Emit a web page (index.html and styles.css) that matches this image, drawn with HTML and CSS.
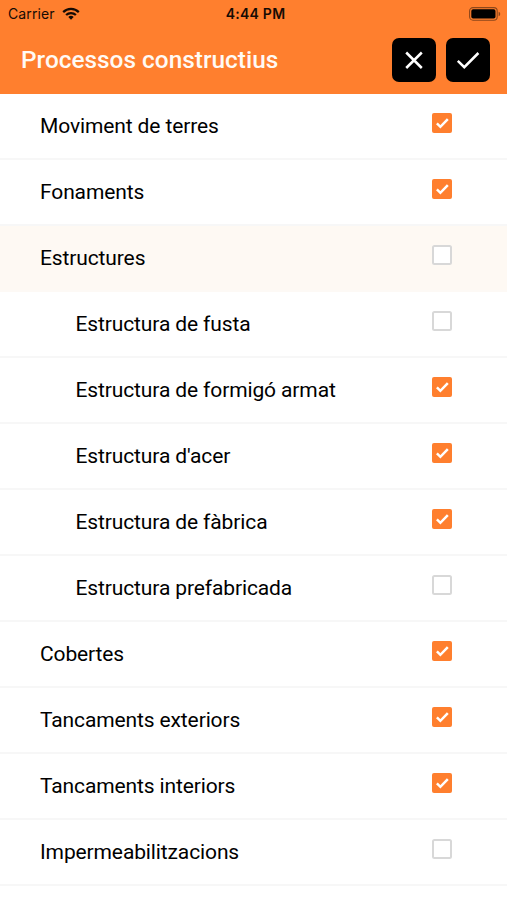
FILE: index.html
```html
<!DOCTYPE html>
<html lang="ca">
<head>
<meta charset="utf-8">
<title>Processos constructius</title>
<link rel="stylesheet" href="styles.css">
</head>
<body>
<svg class="defs" width="0" height="0" aria-hidden="true">
  <symbol id="on" viewBox="0 0 20 20"><rect width="20" height="20" rx="2" fill="#ff7f2e"/><path d="M4.9 10.3 8.4 13.8 15.8 6.1" fill="none" stroke="#fff" stroke-width="2.5"/></symbol>
  <symbol id="off" viewBox="0 0 20 20"><rect x="1" y="1" width="18" height="18" rx="1.5" fill="#fff" stroke="#d8d8d8" stroke-width="2"/></symbol>
</svg>
<header class="header">
  <div class="status">
    <div class="carrier"><span>Carrier</span>
      <svg class="wifi" width="18" height="13" viewBox="0 0 18 13"><g fill="none" stroke="#160b04" stroke-width="2.2"><path d="M1.2 5.1a11 11 0 0 1 15.6 0"/><path d="M4.1 8.1a6.9 6.9 0 0 1 9.8 0"/></g><path d="M9 12.7 6.3 10a3.8 3.8 0 0 1 5.4 0z" fill="#160b04"/></svg>
    </div>
    <div class="time">4:44 PM</div>
    <svg class="battery" width="32" height="14" viewBox="0 0 32 14"><rect x=".6" y=".6" width="27.6" height="12.6" rx="3.4" fill="none" stroke="#8d471b" stroke-width="1.1"/><rect x="2.3" y="2.3" width="24.2" height="9.2" rx="1.8" fill="#000"/><path d="M29.6 4.8a2.3 2.3 0 0 1 0 4.4z" fill="#8d471b"/></svg>
  </div>
  <div class="bar">
    <h1 class="title">Processos constructius</h1>
    <button class="action" aria-label="Cancel·la"><svg width="44" height="44" viewBox="0 0 44 44"><path d="M14.2 14.5 29.8 30M29.8 14.5 14.2 30"/></svg></button>
    <button class="action" aria-label="Accepta"><svg width="44" height="44" viewBox="0 0 44 44"><path d="M11.8 22.8 18.3 29.2 32.4 15"/></svg></button>
  </div>
</header>
<ul class="list">
  <li class="row"><span>Moviment de terres</span><svg class="check"><use href="#on"/></svg></li>
  <li class="row"><span>Fonaments</span><svg class="check"><use href="#on"/></svg></li>
  <li class="row active"><span>Estructures</span><svg class="check"><use href="#off"/></svg></li>
  <li class="row child"><span>Estructura de fusta</span><svg class="check"><use href="#off"/></svg></li>
  <li class="row child"><span>Estructura de formigó armat</span><svg class="check"><use href="#on"/></svg></li>
  <li class="row child"><span>Estructura d'acer</span><svg class="check"><use href="#on"/></svg></li>
  <li class="row child"><span>Estructura de fàbrica</span><svg class="check"><use href="#on"/></svg></li>
  <li class="row child"><span>Estructura prefabricada</span><svg class="check"><use href="#off"/></svg></li>
  <li class="row"><span>Cobertes</span><svg class="check"><use href="#on"/></svg></li>
  <li class="row"><span>Tancaments exteriors</span><svg class="check"><use href="#on"/></svg></li>
  <li class="row"><span>Tancaments interiors</span><svg class="check"><use href="#on"/></svg></li>
  <li class="row"><span>Impermeabilitzacions</span><svg class="check"><use href="#off"/></svg></li>
</ul>
</body>
</html>
```
FILE: styles.css
```css
* { box-sizing: border-box; }
body { margin: 0; height: 900px; overflow: hidden; background: #fff; font-family: Roboto, sans-serif; color: #000; }
.defs { display: block; height: 0; }
.header { height: 93.5px; background: #ff7f2e; }
.status { display: grid; grid-template-columns: 1fr auto 1fr; align-items: center; height: 27px; padding: 0 6px 0 8px; font-family: Inter, sans-serif; font-size: 14px; color: #160b04; }
.carrier { display: flex; align-items: center; gap: 7px; letter-spacing: .12px; }
.time { padding-left: 2px; font-size: 14px; font-weight: 600; letter-spacing: .25px; }
.battery { justify-self: end; }
.bar { display: flex; align-items: center; gap: 10px; height: 66px; padding: 0 17px 0 21px; }
.title { flex: 1; margin: 0; font-size: 24.4px; line-height: 28px; font-weight: 500; color: #fffaf5; white-space: nowrap; }
.action { width: 44px; height: 44px; padding: 0; border: 0; border-radius: 7px; background: #000; }
.action svg { display: block; fill: none; stroke: #fff; stroke-width: 2.5; }
.list { margin: 0; padding: .5px 0 0; list-style: none; }
.row { display: flex; align-items: center; justify-content: space-between; height: 66px; padding: 0 55px 0 40px; border-bottom: 2px solid #f7f7f7; font-size: 21px; line-height: 24px; letter-spacing: -.12px; }
.child { padding-left: 75.5px; }
.active { background: #fef9f3; border-bottom-color: #fdf9f5; }
.check { width: 20px; height: 20px; margin-bottom: 6px; }
```
